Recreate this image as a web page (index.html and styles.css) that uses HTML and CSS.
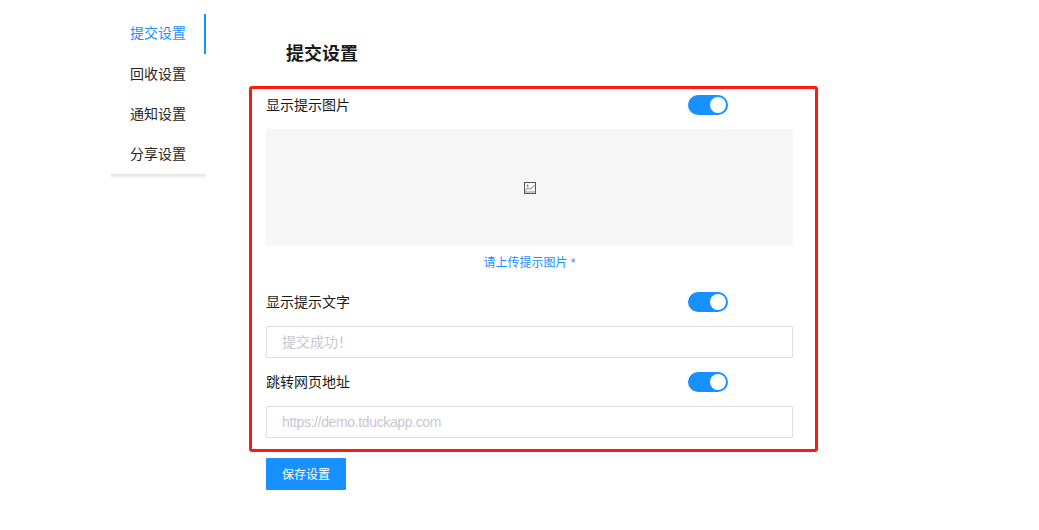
FILE: index.html
```html
<!DOCTYPE html>
<html lang="en">
<head>
    <meta charset="UTF-8">
    <meta name="viewport" content="width=device-width, initial-scale=1.0">
    <title>提交设置</title>
    <link rel="stylesheet" href="styles.css">
</head>
<body>
    <div class="page">
        <nav class="side-menu">
            <a class="side-item active">提交设置</a>
            <a class="side-item">回收设置</a>
            <a class="side-item">通知设置</a>
            <a class="side-item">分享设置</a>
        </nav>
        <main class="content">
            <h2 class="title">提交设置</h2>
            <section class="settings-box">
                <div class="row">
                    <span class="row-label">显示提示图片</span>
                    <span class="switch"></span>
                </div>
                <div class="image-holder">
                    <svg class="broken-img" width="12" height="12" viewBox="0 0 12 12">
                        <rect x="0.5" y="0.5" width="11" height="11" fill="#fff" stroke="#555"/>
                        <rect x="1" y="9" width="10" height="2" fill="#c4c4c4"/>
                        <path d="M1.5 8.5 L4 5.5 L6 7.5 L8.5 5 L10.5 3.5" fill="none" stroke="#5a6f90"/>
                        <circle cx="3.5" cy="3.5" r="1" fill="#c8553d"/>
                    </svg>
                </div>
                <a class="upload-link">请上传提示图片 *</a>
                <div class="row">
                    <span class="row-label">显示提示文字</span>
                    <span class="switch"></span>
                </div>
                <input class="text-input" type="text" placeholder="提交成功！">
                <div class="row">
                    <span class="row-label">跳转网页地址</span>
                    <span class="switch"></span>
                </div>
                <input class="text-input url-input" type="text" placeholder="https://demo.tduckapp.com">
            </section>
            <button class="save-btn">保存设置</button>
        </main>
    </div>
</body>
</html>
```

FILE: styles.css
```css
/* Global Styles */
body {
    font-family: "Liberation Sans", "Noto Sans CJK SC", sans-serif;
    margin: 0;
    padding: 0;
    background-color: #fff;
    color: #1a1a1a;
    font-size: 14px;
}

.page {
    display: flex;
    align-items: flex-start;
    padding: 14px 0 0 111px;
}

.side-menu {
    width: 95px;
    display: flex;
    flex-direction: column;
}

/* soft line under the menu only, not on its sides */
.side-menu::after {
    content: "";
    height: 5px;
    background: linear-gradient(rgba(0, 0, 0, 0.12), rgba(0, 0, 0, 0));
}

.side-item {
    height: 40px;
    line-height: 40px;
    padding-left: 19px;
    color: #262626;
}

.side-item.active {
    line-height: 38px;
    color: #1890ff;
    border-right: 2px solid #1890ff;
}

.content {
    margin-left: 43px;
    width: 569px;
}

.title {
    font-size: 18px;
    line-height: 24px;
    font-weight: 700;
    color: #1a1a1a;
    margin: 28px 0 20px 37px;
}

.settings-box {
    box-sizing: border-box;
    height: 366px;
    padding: 0 22px 0 14px;
    border: 3px solid #fb1c0f;
    border-radius: 3px;
}

.row {
    display: flex;
    align-items: center;
    height: 32px;
}

.row-label {
    width: 422px;
    line-height: 20px;
}

.switch {
    position: relative;
    width: 40px;
    height: 20px;
    border-radius: 10px;
    background-color: #1890ff;
}

.switch::after {
    content: "";
    position: absolute;
    top: 2px;
    right: 2px;
    width: 16px;
    height: 16px;
    border-radius: 50%;
    background-color: #fff;
}

.image-holder {
    height: 117px;
    margin-top: 8px;
    background-color: #f6f6f6;
    display: flex;
    align-items: center;
    justify-content: center;
}

.upload-link {
    display: block;
    height: 40px;
    line-height: 35px;
    font-size: 12px;
    text-align: center;
    color: #1890ff;
}

.text-input {
    display: block;
    box-sizing: border-box;
    width: 527px;
    height: 32px;
    margin: 8px 0;
    padding: 0 15px;
    border: 1px solid #dcdee2;
    border-radius: 1px;
    font-family: inherit;
    font-size: 14px;
    outline: none;
}

.url-input {
    letter-spacing: -0.36px;
}

.text-input::placeholder {
    color: #c5c8ce;
}

.save-btn {
    display: block;
    width: 80px;
    height: 32px;
    margin: 6px 0 0 17px;
    padding: 0 0 2px;
    border: none;
    border-radius: 1px;
    background-color: #1890ff;
    color: #fff;
    font-family: inherit;
    font-size: 12px;
}
```
